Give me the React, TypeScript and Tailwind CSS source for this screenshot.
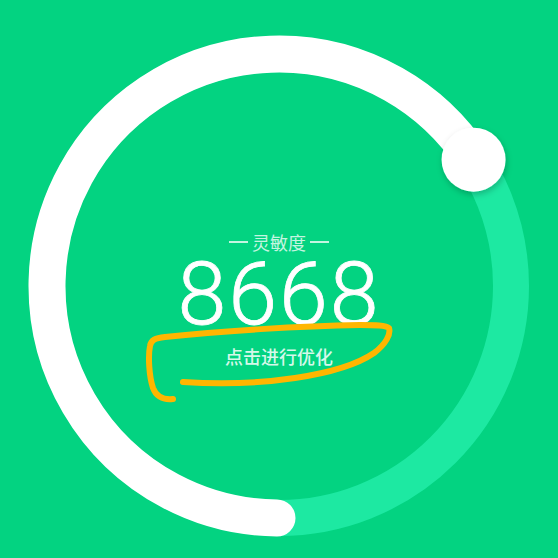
export default function App() {
  // gauge geometry
  const cx = 279
  const cy = 286
  const r = 232
  const endAngle = (-33 * Math.PI) / 180
  const kx = cx + r * Math.cos(endAngle)
  const ky = cy + r * Math.sin(endAngle)

  return (
    <div className="relative w-[558px] h-[558px] overflow-hidden bg-[#03d381]">
      <svg className="absolute inset-0" width="558" height="558" viewBox="0 0 558 558">
        <defs>
          <filter id="knobShadow" x="-50%" y="-50%" width="200%" height="200%">
            <feDropShadow dx="1" dy="3" stdDeviation="3" floodColor="#000" floodOpacity="0.22" />
          </filter>
        </defs>
        <circle cx={cx} cy={cy} r={r} fill="none" stroke="#1de9a2" strokeWidth="36" />
        <path
          d={`M${cx - 2} ${cy + r} A${r} ${r} 0 1 1 ${kx} ${ky}`}
          fill="none"
          stroke="#ffffff"
          strokeWidth="37"
          strokeLinecap="round"
        />
        <circle cx={kx} cy={ky} r="32" fill="#ffffff" filter="url(#knobShadow)" />
      </svg>

      <div
        className="relative flex flex-col items-center pt-[233px]"
        style={{ fontFamily: '"Noto Sans CJK SC", "Noto Sans", sans-serif' }}
      >
        <div className="flex items-center gap-[4px] text-[18px] leading-[18px] text-[#c4f5e0]">
          <span className="block w-[19px] h-[2px] bg-[#c4f5e0]" />
          <span>灵敏度</span>
          <span className="block w-[19px] h-[2px] bg-[#c4f5e0]" />
        </div>
        <div
          className="text-[88px] leading-[80px] mt-[3px] font-light tracking-[2px] text-white [-webkit-text-stroke:0.8px_white]"
          style={{ fontFamily: 'Roboto, "Liberation Sans", sans-serif' }}
        >
          8668
        </div>
        <div className="mt-[13px] text-[18px] leading-[18px] font-medium text-[#d6f8ea]">点击进行优化</div>
      </div>

      <svg className="absolute inset-0 pointer-events-none" width="558" height="558" viewBox="0 0 558 558">
        <path
          d="M173 399 C163 400 156 396 153 388 C149 376 148 356 150 346 C151 340 155 338 165 337 C220 331 300 326 360 325 C375 325 386 325 389 328 C391 334 386 344 374 353 C358 364 335 372 295 378 C255 384 215 384 183 382"
          fill="none"
          stroke="#ffb600"
          strokeWidth="6"
          strokeLinecap="round"
          strokeLinejoin="round"
        />
      </svg>
    </div>
  )
}
